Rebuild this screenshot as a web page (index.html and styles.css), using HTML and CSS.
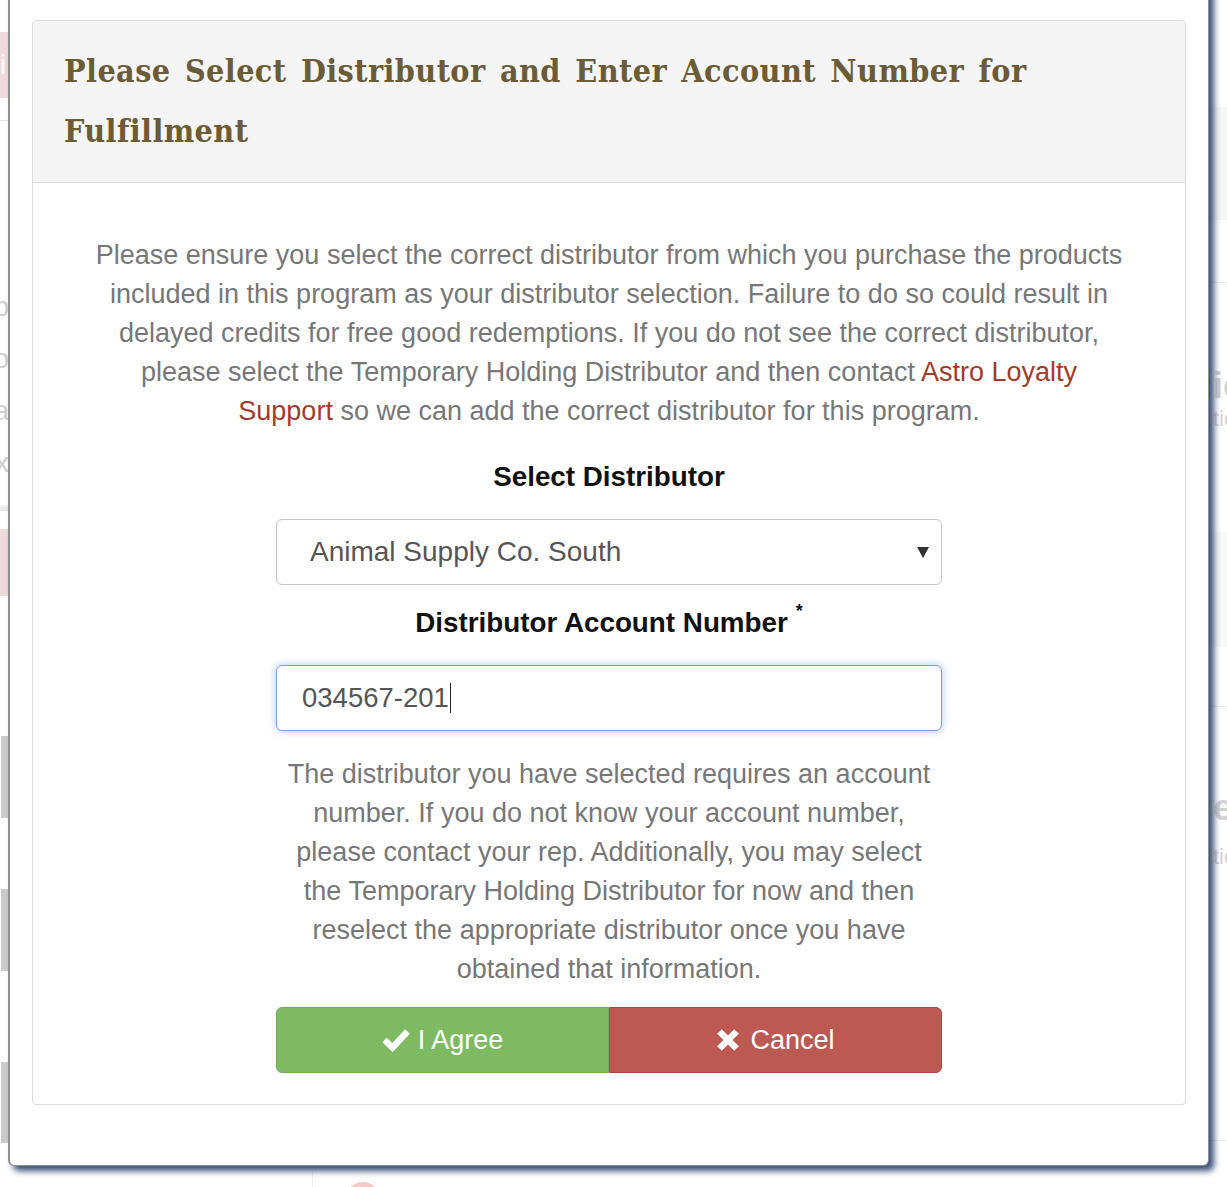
FILE: index.html
```html
<!DOCTYPE html>
<html lang="en">
<head>
<meta charset="utf-8">
<title>Select Distributor</title>
<link rel="stylesheet" href="styles.css">
</head>
<body>
<div class="page">
  <div class="col col-left">
    <div class="l-pink l-pink-1"><span>i</span></div>
    <div class="l-rule"></div>
    <div class="l-text">
      <div>ab</div>
      <div>co</div>
      <div>va</div>
      <div>ex</div>
    </div>
    <div class="l-band"></div>
    <div class="l-pink l-pink-2"></div>
    <div class="l-gray l-gray-1"></div>
    <div class="l-gray l-gray-2"></div>
    <div class="l-gray l-gray-3"></div>
  </div>
  <div class="col col-mid">
    <div class="m-bottom">
      <div class="m-line"></div>
      <div class="m-dot"></div>
    </div>
  </div>
  <div class="col col-right">
    <div class="r-band r-band-1"></div>
    <div class="r-rule r-rule-1"></div>
    <div class="r-big r-big-1">ic</div>
    <div class="r-small r-small-1">tion</div>
    <div class="r-band r-band-2"></div>
    <div class="r-rule r-rule-2"></div>
    <div class="r-big r-big-2">e</div>
    <div class="r-small r-small-2">tion</div>
    <div class="r-rule r-rule-3"></div>
  </div>
</div>

<div class="modal">
  <div class="panel">
    <div class="panel-head">
      <h3 class="title">Please Select Distributor and Enter Account Number for Fulfillment</h3>
    </div>
    <div class="panel-body">
      <p class="intro">Please ensure you select the correct distributor from which you purchase the products included in this program as your distributor selection. Failure to do so could result in delayed credits for free good redemptions. If you do not see the correct distributor, please select the Temporary Holding Distributor and then contact <a class="link" href="#">Astro Loyalty Support</a> so we can add the correct distributor for this program.</p>
      <div class="form">
        <div class="label label-1">Select Distributor</div>
        <div class="select">
          <span class="select-text">Animal Supply Co. South</span>
          <svg class="select-arrow" width="12" height="12" viewBox="0 0 12 12"><polygon points="0,1 12,1 6,12" fill="#333"/></svg>
        </div>
        <div class="label label-2">Distributor Account Number<sup class="req">*</sup></div>
        <div class="input"><span class="input-text">034567-201</span><span class="caret"></span></div>
        <p class="help">The distributor you have selected requires an account number. If you do not know your account number, please contact your rep. Additionally, you may select the Temporary Holding Distributor for now and then reselect the appropriate distributor once you have obtained that information.</p>
        <div class="buttons">
          <button class="btn btn-agree" type="button">
            <svg class="icon" width="28" height="24" viewBox="0 0 28 24"><path d="M2.5 12 L10.5 19.5 L25.5 3.5" fill="none" stroke="#fff" stroke-width="6.5"/></svg>
            <span>I Agree</span>
          </button>
          <button class="btn btn-cancel" type="button">
            <svg class="icon" width="24" height="24" viewBox="0 0 24 24"><path d="M3.5 3.5 L20.5 20.5 M20.5 3.5 L3.5 20.5" fill="none" stroke="#fff" stroke-width="6.5"/></svg>
            <span>Cancel</span>
          </button>
        </div>
      </div>
    </div>
  </div>
</div>
</body>
</html>
```

FILE: styles.css
```css
* { box-sizing: border-box; }
html, body { margin: 0; padding: 0; }
body {
  width: 1227px;
  height: 1187px;
  overflow: hidden;
  background: #fff;
  font-family: "Liberation Sans", Arial, sans-serif;
  position: relative;
}

/* ---------- background page (mostly hidden by the modal) ---------- */
.page {
  display: grid;
  grid-template-columns: 9px 1fr 17px;
  height: 1187px;
}
.col { overflow: hidden; }
.col-left { direction: rtl; }
.l-pink { background: #f1dada; }
.l-pink-1 {
  margin-top: 32px;
  height: 66px;
  color: #fff;
  font-size: 27px;
  line-height: 66px;
  white-space: nowrap;
  padding-right: 3px;
}
.l-rule { margin-top: 22px; height: 1px; background: #e6e6e6; }
.l-text {
  margin-top: 160px;
  color: #cfcfcf;
  font-size: 27px;
  line-height: 52px;
  white-space: nowrap;
}
.l-band { margin-top: 16px; height: 6px; background: linear-gradient(#f4f4f4, #e6e6e6); }
.l-pink-2 { margin-top: 18px; height: 67px; background: #f0dada; }
.l-gray { background: #cbcbcb; width: 7px; margin-right: 1px; }
.l-gray-1 { margin-top: 140px; height: 82px; }
.l-gray-2 { margin-top: 71px; height: 82px; }
.l-gray-3 { margin-top: 91px; height: 81px; }

.m-bottom {
  margin-top: 1168px;
  display: flex;
  align-items: flex-start;
}
.m-line { margin-left: 303px; width: 1px; height: 19px; background: #ececec; }
.m-dot {
  margin-left: 33px;
  margin-top: 14px;
  width: 34px;
  height: 34px;
  border-radius: 50%;
  background: #f4c9c9;
}

.r-band { background: #f6f6f6; }
.r-band-1 { margin-top: 107px; height: 113px; }
.r-rule { height: 1px; background: #ececec; }
.r-rule-1 { margin-top: 62px; }
.r-big {
  color: #d2d2d2;
  font-weight: bold;
  font-size: 36px;
  line-height: 40px;
  padding-left: 3px;
  white-space: nowrap;
}
.r-big-1 { margin-top: 83px; }
.r-small {
  color: #d4d4d4;
  font-size: 22px;
  line-height: 26px;
  padding-left: 3px;
  white-space: nowrap;
}
.r-small-1 { margin-top: 0; }
.r-band-2 { margin-top: 100px; height: 115px; background: #f8f8f8; }
.r-rule-2 { margin-top: 59px; }
.r-big-2 { margin-top: 81px; }
.r-small-2 { margin-top: 16px; }
.r-rule-3 { margin-top: 270px; }

/* ---------- modal ---------- */
.modal {
  position: absolute;
  left: 8px;
  top: -30px;
  width: 1201px;
  padding: 49px 22px 60px;
  background: #fff;
  border: 1px solid #8f8f8f;
  border-left-width: 2px;
  border-radius: 6px;
  box-shadow: 5px 5px 6px rgba(48, 70, 112, 0.95);
}
.panel {
  border: 1px solid #dddddd;
  border-radius: 4px;
  background: #fff;
}
.panel-head {
  background: #f5f5f5;
  border-bottom: 1px solid #dddddd;
  border-radius: 3px 3px 0 0;
  padding: 20px 31px 21px;
}
.title {
  margin: 0;
  font-family: "DejaVu Serif Condensed", "DejaVu Serif", serif;
  font-stretch: condensed;
  font-weight: bold;
  font-size: 32px;
  line-height: 60px;
  letter-spacing: 0.4px;
  word-spacing: 4px;
  color: #6b5c37;
}
.panel-body {
  padding: 53px 0 31px;
  display: flex;
  flex-direction: column;
  align-items: center;
}
.intro {
  margin: 0;
  max-width: 1031px;
  text-align: center;
  color: #777;
  font-size: 27px;
  line-height: 39px;
}
.link { color: #a33a2a; text-decoration: none; }

.form {
  width: 666px;
  display: flex;
  flex-direction: column;
  align-items: stretch;
}
.label {
  text-align: center;
  font-weight: bold;
  font-size: 27.8px;
  line-height: 30px;
  color: #111;
}
.label-1 { margin-top: 31px; }
.label-2 { margin-top: 23px; }
.req {
  font-size: 18px;
  font-weight: bold;
  vertical-align: top;
  line-height: 1;
  position: relative;
  top: -6px;
  margin-left: 8px;
}
.select {
  margin-top: 27px;
  height: 66px;
  border: 1px solid #c6c6c6;
  border-radius: 6px;
  background: #fff;
  display: flex;
  align-items: center;
  justify-content: space-between;
  padding: 0 12px 0 33px;
  color: #555;
  font-size: 28px;
}
.select-arrow { display: block; margin-top: -1px; }
.input {
  margin-top: 27px;
  height: 66px;
  border: 1px solid #77a0e6;
  border-radius: 6px;
  box-shadow: 0 0 8px rgba(102, 150, 233, 0.55);
  background: #fff;
  display: flex;
  align-items: center;
  padding: 0 0 0 25px;
  color: #555;
  font-size: 27.5px;
}
.caret {
  display: block;
  width: 1px;
  height: 30px;
  background: #222;
  margin-left: 1px;
}
.help {
  margin: 24px auto 0;
  max-width: 660px;
  text-align: center;
  color: #777;
  font-size: 27px;
  line-height: 39px;
}
.buttons {
  margin-top: 18px;
  display: flex;
}
.btn {
  flex: 1 1 0;
  height: 66px;
  display: flex;
  align-items: center;
  justify-content: center;
  gap: 8px;
  color: #fff;
  font-family: "Liberation Sans", Arial, sans-serif;
  font-size: 27px;
  padding: 0;
  margin: 0;
  cursor: pointer;
}
.btn-agree {
  background: #7dba62;
  border: 1px solid #71ae57;
  border-radius: 6px 0 0 6px;
}
.btn-cancel {
  background: #bc5953;
  border: 1px solid #b0463f;
  border-radius: 0 6px 6px 0;
  gap: 10px;
}
.icon { display: block; }
```
